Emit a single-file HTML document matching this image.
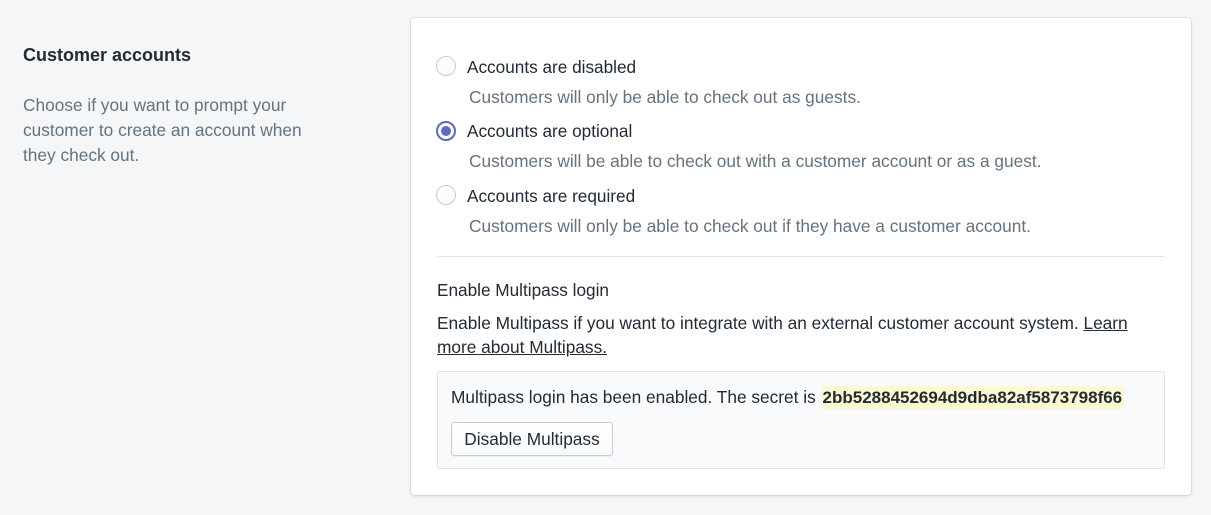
<!DOCTYPE html>
<html><head><style>
*{margin:0;padding:0;box-sizing:border-box}
body{width:1211px;height:515px;background:#f4f6f8;font-family:"Liberation Sans",sans-serif;color:#212b36;position:relative;overflow:hidden;font-size:17.2px}
.a{position:absolute;white-space:nowrap;line-height:20px}
.g{color:#637381}
.s{font-size:17.3px}
.card{position:absolute;left:411px;top:18px;width:780px;height:477px;background:#fff;border-radius:4px;box-shadow:0 0 0 1px rgba(63,63,68,.07),0 1px 3px rgba(63,63,68,.18)}
.r{position:absolute;width:20px;height:20px;border-radius:50%;border:1px solid #c4cdd5;background:linear-gradient(#fff,#f9fafb)}
.r.on{border:2px solid #5c6ac4}
.r.on::after{content:"";position:absolute;left:3px;top:3px;width:10px;height:10px;border-radius:50%;background:#5c6ac4}
</style></head><body>
<div class="a" style="left:23px;top:45px;font-weight:bold;font-size:18px">Customer accounts</div>
<div class="a g s" style="left:23px;top:93px;line-height:25px;white-space:normal;width:320px">Choose if you want to prompt your<br>customer to create an account when<br>they check out.</div>
<div class="card"></div>
<div class="r" style="left:436px;top:56px"></div>
<div class="a" style="left:467px;top:57px">Accounts are disabled</div>
<div class="a g s" style="left:469px;top:87px">Customers will only be able to check out as guests.</div>
<div class="r on" style="left:436px;top:121px"></div>
<div class="a" style="left:467px;top:121px">Accounts are optional</div>
<div class="a g s" style="left:469px;top:151px">Customers will be able to check out with a customer account or as a guest.</div>
<div class="r" style="left:436px;top:185px"></div>
<div class="a" style="left:467px;top:186px">Accounts are required</div>
<div class="a g s" style="left:469px;top:216px">Customers will only be able to check out if they have a customer account.</div>
<div style="position:absolute;left:437px;top:256px;width:728px;height:1px;background:#dfe3e8"></div>
<div class="a" style="left:437px;top:280px">Enable Multipass login</div>
<div class="a s" style="left:437px;top:313px">Enable Multipass if you want to integrate with an external customer account system. <u>Learn</u></div>
<div class="a s" style="left:437px;top:337px"><u>more about Multipass.</u></div>
<div style="position:absolute;left:437px;top:371px;width:728px;height:98px;background:#f9fafb;border:1px solid #dfe3e8;border-radius:3px"></div>
<div class="a s" style="left:451px;top:387px">Multipass login has been enabled. The secret is <span style="background:#fcf9d0;font-weight:bold;padding:2px 2px;font-size:17px">2bb5288452694d9dba82af5873798f66</span></div>
<div class="s" style="position:absolute;left:451px;top:422px;width:162px;height:34px;border:1px solid #c4cdd5;border-radius:3px;background:linear-gradient(#fff,#f9fafb);box-shadow:0 1px 0 rgba(22,29,37,.05);text-align:center;line-height:33px">Disable Multipass</div>
</body></html>
